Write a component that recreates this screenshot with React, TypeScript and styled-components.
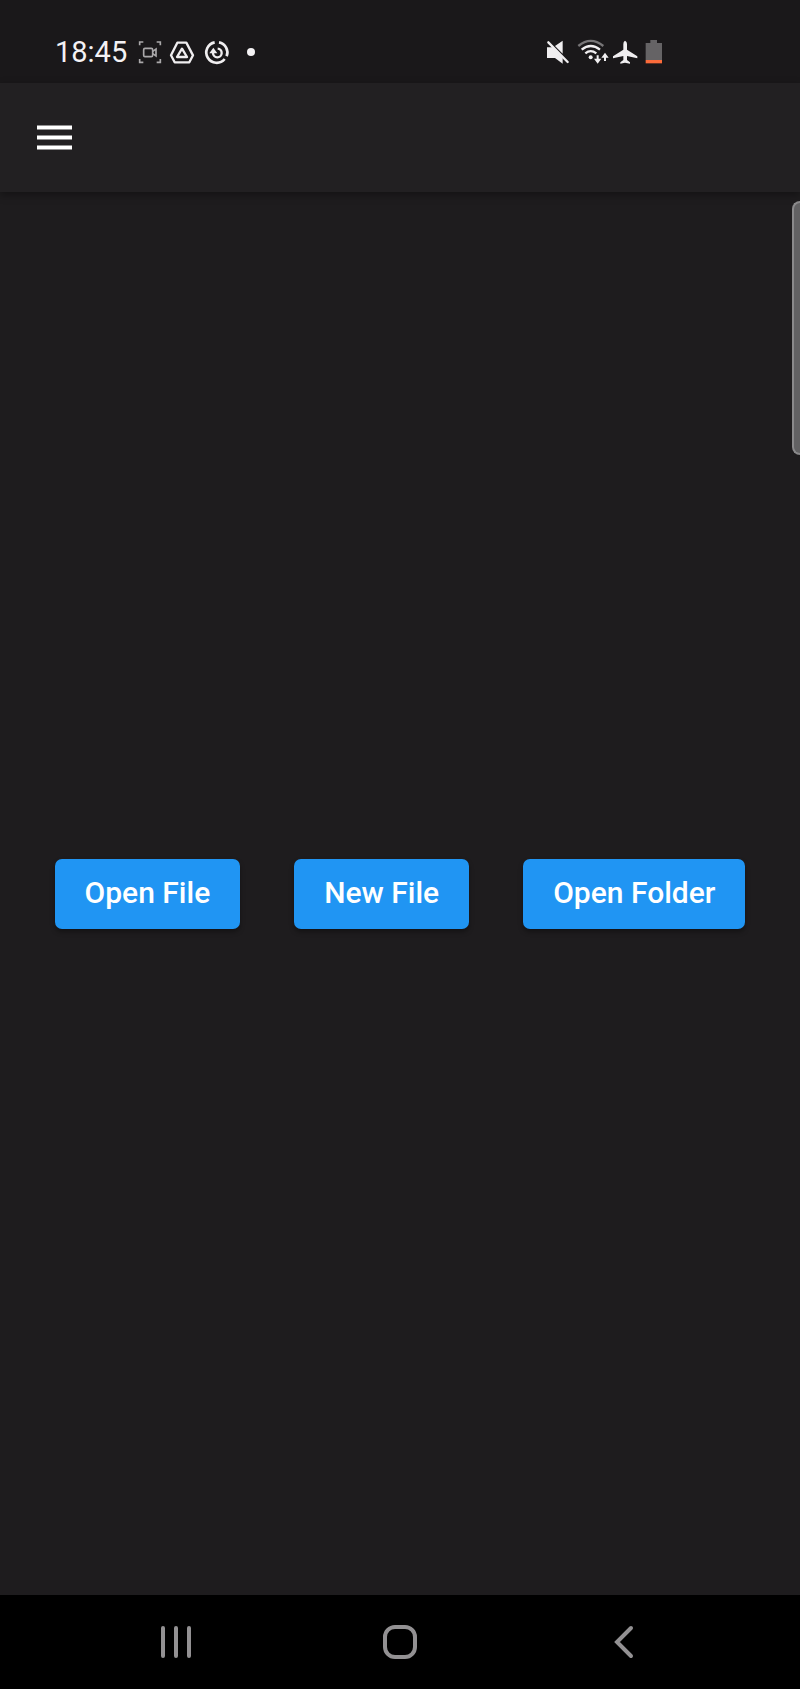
import React from "react";
import styled, { createGlobalStyle } from "styled-components";

const GlobalStyle = createGlobalStyle`
  *, *::before, *::after { box-sizing: border-box; }
  body {
    margin: 0;
    background: #1e1c1e;
    font-family: Roboto, "Liberation Sans", sans-serif;
  }
`;

const Screen = styled.div`
  display: flex;
  flex-direction: column;
  min-height: 100vh;
  background: #1e1c1e;
`;

const StatusBar = styled.div`
  display: flex;
  align-items: center;
  justify-content: space-between;
  height: 83px;
  padding: 20px 136px 0 55px;
  background: #1a181a;
`;

const StatusGroup = styled.div<{ $gap: number }>`
  display: flex;
  align-items: center;
  gap: ${({ $gap }) => $gap}px;
`;

const Clock = styled.time`
  margin-right: 3px;
  color: #f4f2f4;
  font-size: 29px;
  line-height: 32px;
`;

const StatusIcon = styled.svg`
  display: block;
  height: 26px;
  overflow: visible;
`;

const AppBar = styled.header`
  position: relative;
  display: flex;
  align-items: center;
  height: 109px;
  padding: 0 37px;
  background: #222022;
  box-shadow: 0 3px 8px rgba(0, 0, 0, 0.35);
`;

const IconButton = styled.button`
  display: flex;
  align-items: center;
  justify-content: center;
  padding: 0;
  border: 0;
  background: none;
  color: inherit;
  cursor: pointer;
`;

const Main = styled.main`
  position: relative;
  flex: 1;
  display: flex;
  align-items: center;
  justify-content: center;
  padding: 32px 0;
  overflow: hidden;
`;

const Actions = styled.div`
  display: flex;
  flex-wrap: wrap;
  justify-content: center;
  gap: 54px;
`;

const ActionButton = styled.button`
  height: 70px;
  padding: 0 30px 2px;
  border: 0;
  border-radius: 7px;
  background: #2095f3;
  box-shadow: 0 3px 5px rgba(0, 0, 0, 0.35);
  color: #fff;
  font-family: inherit;
  font-size: 30px;
  font-weight: 500;
  line-height: 34px;
  white-space: nowrap;
  cursor: pointer;
`;

const EdgeHandle = styled.div`
  position: absolute;
  top: 9px;
  right: 0;
  width: 8px;
  height: 254px;
  border: 2px solid #8a898b;
  border-right: 0;
  border-radius: 8px 0 0 8px;
  background: #626163;
`;

const NavBar = styled.nav`
  display: grid;
  grid-template-columns: repeat(3, 1fr);
  height: 94px;
  padding: 0 8%;
  background: #000;
  color: #939193;
`;

export default function App() {
  return (
    <Screen>
      <GlobalStyle />
      <StatusBar>
        <StatusGroup $gap={8}>
          <Clock>18:45</Clock>
          <StatusIcon width="24" viewBox="24 24 72 78" fill="none" stroke="#aaa8aa" strokeWidth="5" aria-hidden="true">
            <path d="M29 43V33H40M80 33H91V43M29 84V94H40M80 94H91V84" />
            <rect x="41" y="52" width="27" height="25" rx="4" />
            <path d="M68 61L78 54V75L68 68" />
          </StatusIcon>
          <StatusIcon width="26" viewBox="120 24 78 78" fill="none" stroke="#f0eef0" strokeWidth="7" strokeLinejoin="round" aria-hidden="true">
            <path d="M142 35H169L189 73L178 94H134L123 73Z" />
            <path d="M156 53L171 78H141Z" />
          </StatusIcon>
          <StatusIcon width="26" viewBox="222 24 78 78" fill="none" stroke="#f0eef0" strokeWidth="8" aria-hidden="true">
            <path d="M254 34A31 31 0 1 0 284 84M290 76A31 31 0 0 0 267 34" />
            <path d="M263 53A13 13 0 1 1 249 66" strokeWidth="7" />
            <path d="M238 67L250 50L262 67Z" fill="#f0eef0" stroke="none" />
          </StatusIcon>
          <StatusIcon width="26" viewBox="325 24 78 78" aria-hidden="true">
            <circle cx="364" cy="63" r="12" fill="#f4f2f4" />
          </StatusIcon>
        </StatusGroup>
        <StatusGroup $gap={4}>
          <StatusIcon width="28" viewBox="33 24 84 78" fill="#f0eef0" aria-hidden="true">
            <path d="M36 49H52L83 81V98L60 81H36ZM60 45L83 29V68Z" />
            <path d="M40 34L98 93" stroke="#f0eef0" strokeWidth="7" strokeLinecap="round" />
          </StatusIcon>
          <StatusIcon width="30" viewBox="129 24 90 78" fill="none" stroke="#f0eef0" strokeWidth="7" aria-hidden="true">
            <path d="M130 45Q167 14 205 45" stroke="#777577" />
            <path d="M140 56Q167 34 195 56M151 67Q167 54 184 67" />
            <circle cx="167" cy="79" r="6" fill="#f0eef0" stroke="none" />
            <path d="M188 73V92M210 90V70" strokeWidth="6" />
            <path d="M177 83L188 98L199 83ZM199 80L210 65L221 80Z" fill="#f0eef0" stroke="none" />
          </StatusIcon>
          <StatusIcon width="28" viewBox="231 24 84 78" fill="#f0eef0" aria-hidden="true">
            <path d="M270 29Q276 31 276 39V56L307 76V82L276 75V87L285 94V98L270 95L256 98V94L265 87V75L234 82V76L265 56V39Q265 31 270 29Z" />
          </StatusIcon>
          <StatusIcon width="20" viewBox="327 24 60 78" fill="#656365" aria-hidden="true">
            <path d="M346 27H366V36H381V88H332V36H346Z" />
            <path d="M332 87H381V97H332Z" fill="#fb6b3b" />
          </StatusIcon>
        </StatusGroup>
      </StatusBar>
      <AppBar>
        <IconButton type="button" aria-label="Open menu">
          <svg width="35" height="25" viewBox="0 0 35 25" fill="#fff" aria-hidden="true">
            <path d="M0 .5H35V4.5H0ZM0 10.5H35V14.5H0ZM0 20.5H35V24.5H0Z" />
          </svg>
        </IconButton>
      </AppBar>
      <Main>
        <Actions>
          <ActionButton type="button">Open File</ActionButton>
          <ActionButton type="button">New File</ActionButton>
          <ActionButton type="button">Open Folder</ActionButton>
        </Actions>
        <EdgeHandle />
      </Main>
      <NavBar aria-label="System navigation">
        <IconButton type="button" aria-label="Recent apps">
          <svg width="36" height="36" viewBox="0 0 36 36" stroke="currentColor" strokeWidth="4" strokeLinecap="round" aria-hidden="true">
            <path d="M5 4V32M18 4V32M31 4V32" />
          </svg>
        </IconButton>
        <IconButton type="button" aria-label="Home">
          <svg width="36" height="36" viewBox="0 0 36 36" fill="none" stroke="currentColor" strokeWidth="4" aria-hidden="true">
            <rect x="3" y="3" width="30" height="30" rx="10" />
          </svg>
        </IconButton>
        <IconButton type="button" aria-label="Back">
          <svg width="36" height="36" viewBox="0 0 36 36" fill="none" stroke="currentColor" strokeWidth="4" strokeLinecap="round" aria-hidden="true">
            <path d="M25 4L11 18L25 32" />
          </svg>
        </IconButton>
      </NavBar>
    </Screen>
  );
}
